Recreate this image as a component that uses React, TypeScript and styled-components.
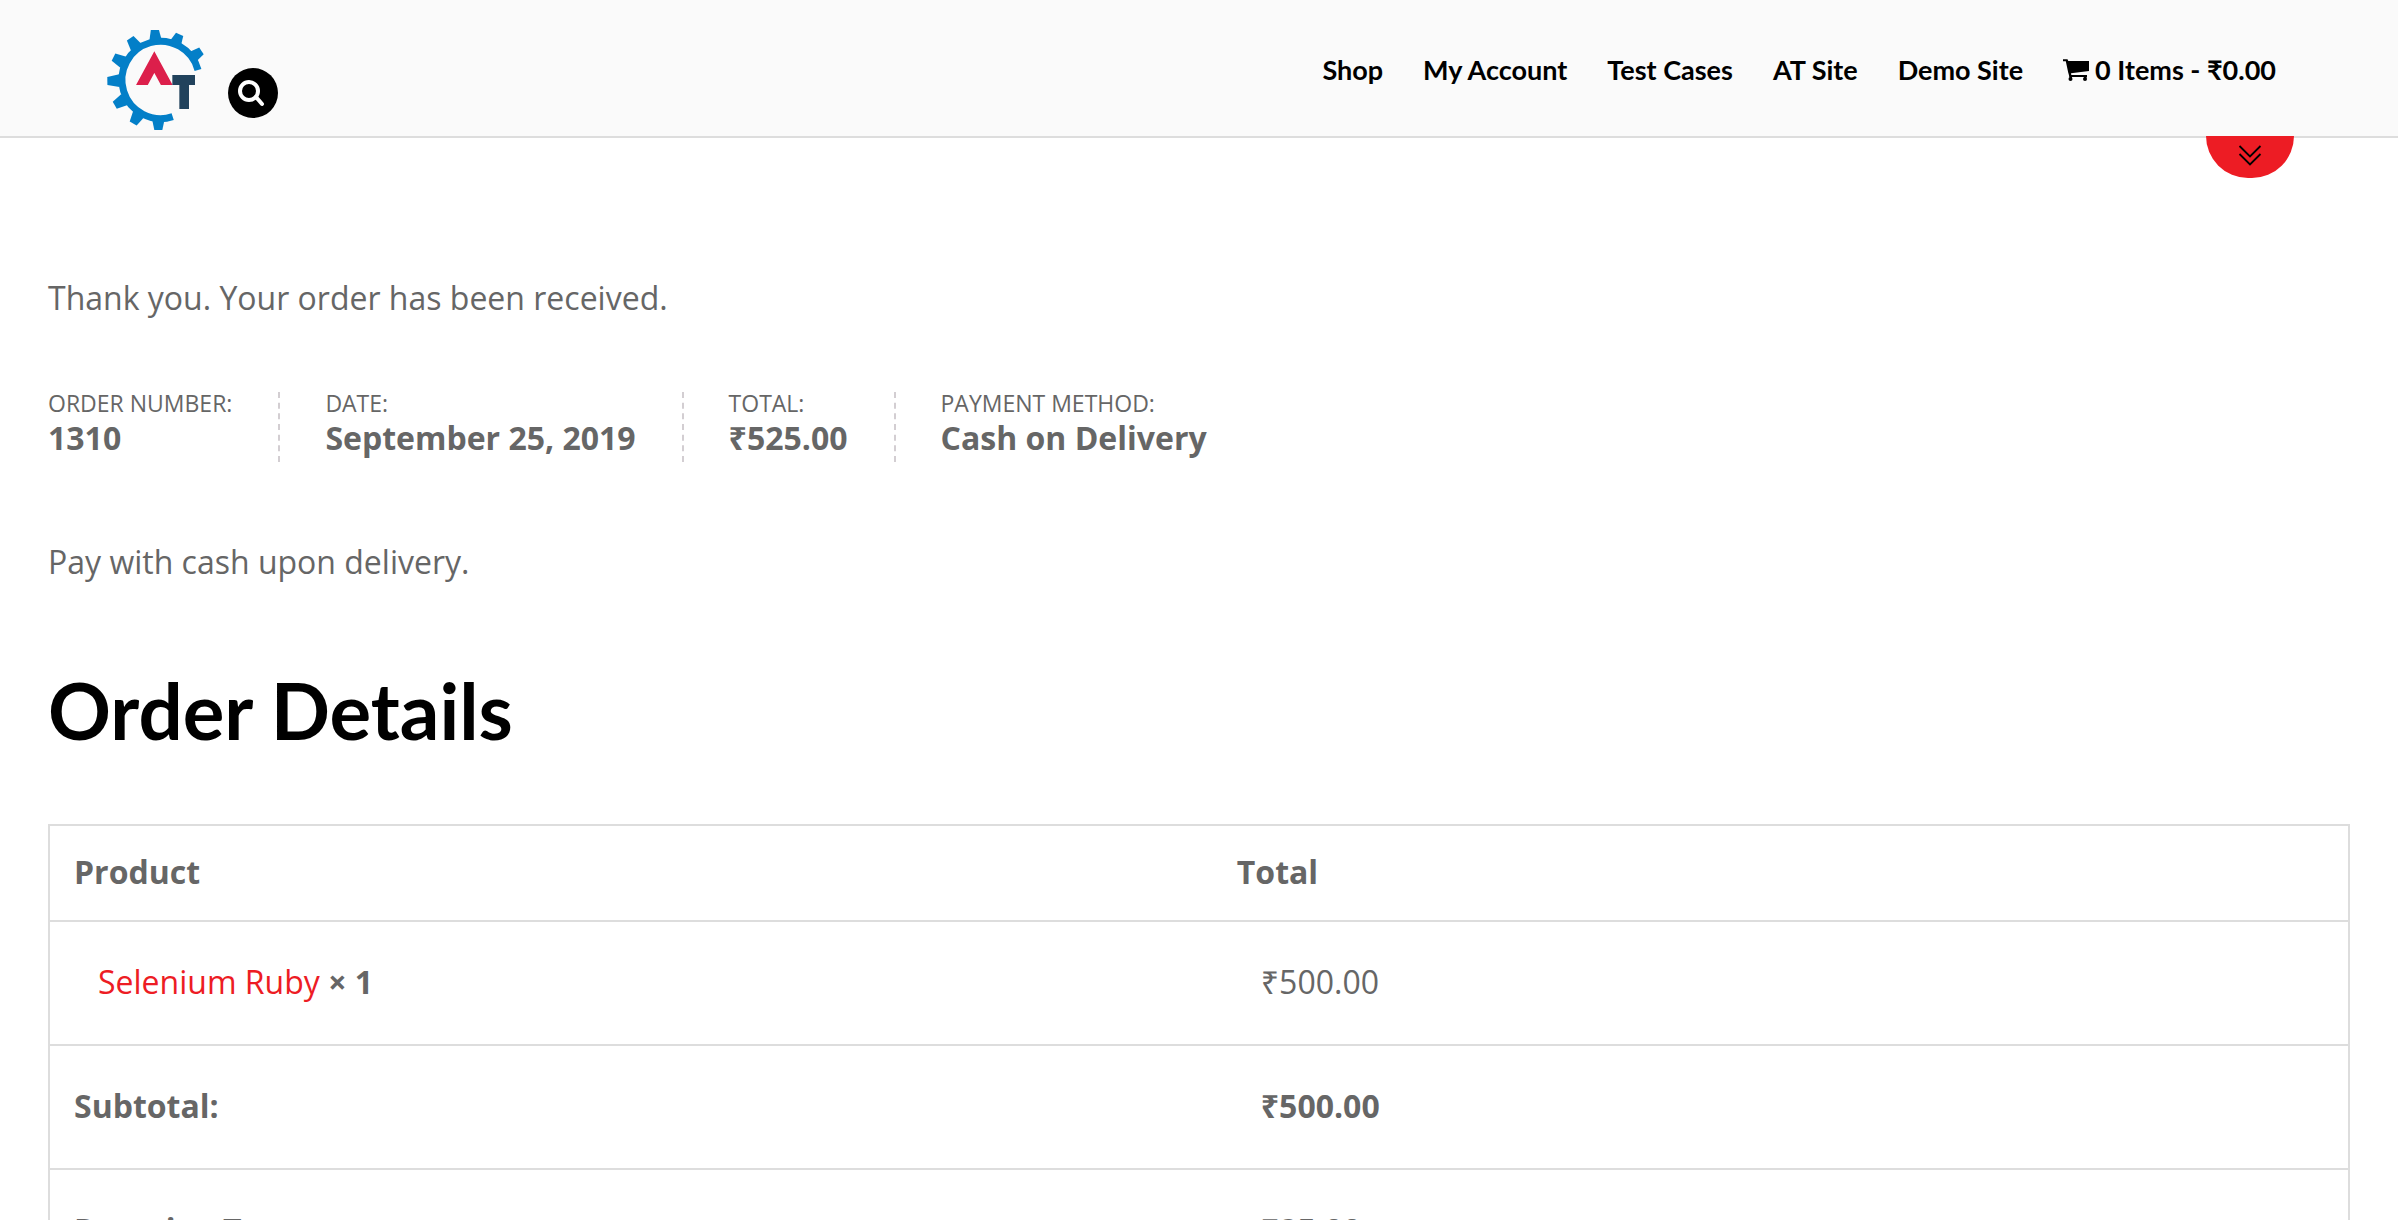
import React from "react";
import styled, { createGlobalStyle } from "styled-components";

const GlobalStyle = createGlobalStyle`
  *, *::before, *::after { box-sizing: border-box; }
  body {
    margin: 0;
    background: #fff;
    color: #666;
    font: 400 32px/48px "Open Sans", "Noto Sans", sans-serif;
  }
`;

const Header = styled.header`
  position: relative;
  display: flex;
  justify-content: space-between;
  align-items: flex-start;
  height: 138px;
  padding: 30px 122px 0 106px;
  background: #fafafa;
  border-bottom: 2px solid #ddd;
`;

const Brand = styled.div`
  display: flex;
  align-items: flex-end;
  gap: 24px;
`;

const HomeLink = styled.a`
  display: block;
  height: 100px;
`;

const SearchButton = styled.button`
  display: grid;
  place-items: center;
  width: 50px;
  height: 50px;
  margin-bottom: 12px;
  padding: 0;
  border: 0;
  border-radius: 50%;
  background: #000;
`;

const Nav = styled.nav`
  display: flex;
  gap: 40px;
  padding-top: 20px;
`;

const NavLink = styled.a`
  display: flex;
  align-items: center;
  gap: 6px;
  color: #000;
  font: 700 27px/40px Lato, "Open Sans", sans-serif;
  text-decoration: none;
  white-space: nowrap;
`;

const PanelToggle = styled.button`
  position: absolute;
  top: 136px;
  right: 104px;
  display: flex;
  justify-content: center;
  width: 88px;
  height: 42px;
  padding: 8px 0 0;
  border: 0;
  border-radius: 0 0 44px 44px;
  background: #ed1c24;
`;

const Main = styled.main`
  padding: 136px 48px 48px;
`;

const Message = styled.p`
  margin: 0;
`;

const Overview = styled.ul`
  display: flex;
  flex-wrap: wrap;
  gap: 45px;
  margin: 70px 0 76px;
  padding: 0;
  list-style: none;
`;

const OverviewItem = styled.li`
  padding-right: 46px;
  border-right: 2px dashed #d3ced2;
  font-size: 23px;
  line-height: 22px;
  text-transform: uppercase;

  &:last-child {
    padding-right: 0;
    border-right: 0;
  }
`;

const OverviewValue = styled.strong`
  display: block;
  font-size: 32px;
  line-height: 48px;
  text-transform: none;
`;

const Title = styled.h2`
  margin: 80px 0 70px;
  color: #000;
  font: 700 78px/88px Lato, "Open Sans", sans-serif;
`;

const OrderTable = styled.table`
  width: 100%;
  table-layout: fixed;
  border-collapse: collapse;
  border: 2px solid #ddd;
  text-align: left;
`;

const Row = styled.tr`
  border-top: 2px solid #ddd;
`;

const ColumnHead = styled.th<{ $width?: string }>`
  width: ${(p) => p.$width ?? "auto"};
  padding: 22px 24px 24px;
`;

const RowHead = styled.th`
  padding: 36px 24px 38px;
`;

const Cell = styled.td<{ $bold?: boolean }>`
  padding: 36px 48px 38px;
  font-weight: ${(p) => (p.$bold ? 700 : 400)};
`;

const ProductLink = styled.a`
  color: #ed1c24;
  text-decoration: none;
`;

const TEETH = [
  { angle: 34, reach: 356 + 5 },
  { angle: 65, reach: 356 },
  { angle: 94, reach: 356 },
  { angle: 124, reach: 356 },
  { angle: 153, reach: 356 },
  { angle: 181, reach: 358 },
  { angle: 210, reach: 356 },
  { angle: 240, reach: 356 },
  { angle: 270, reach: 355 },
];

const Logo = () => (
  <svg width="98" height="100" viewBox="48 60 294 300" role="img" aria-label="AT">
    <defs>
      <clipPath id="peak">
        <rect x="130" y="110" width="120" height="115" />
      </clipPath>
    </defs>
    <path d="M324 180 A116 116 0 1 0 248 320" fill="none" stroke="#037fc8" strokeWidth="21" />
    {TEETH.map(({ angle, reach }) => (
      <polygon
        key={angle}
        points={`322,-19 ${reach},-12 ${reach},12 322,19`}
        fill="#037fc8"
        transform={`translate(205 210) rotate(${-angle}) translate(-205 0)`}
      />
    ))}
    <polyline
      points="139,256 193,156 247,256"
      fill="none"
      stroke="#dc1f4b"
      strokeWidth="31"
      strokeMiterlimit="6"
      clipPath="url(#peak)"
    />
    <rect x="247" y="195" width="68" height="30" fill="#21425c" />
    <rect x="268" y="195" width="29" height="102" fill="#21425c" />
  </svg>
);

const SearchIcon = () => (
  <svg width="30" height="30" viewBox="0 0 30 30" fill="none" stroke="#fff" strokeWidth="4" aria-hidden="true">
    <circle cx="11" cy="13" r="9" />
    <path d="M18 19 L24 26" strokeLinecap="round" />
  </svg>
);

const CartIcon = () => (
  <svg width="26" height="24" viewBox="0 0 26 24" aria-hidden="true">
    <path d="M0 1.200 H4.500 L5.300 3 H26 V13 L8 15.200 L8.300 17 H24 V19 H6.500 L5.200 14.500 L2.800 3.200 H0 Z" />
    <circle cx="7.500" cy="21" r="2" />
    <circle cx="22" cy="21" r="2" />
    <path d="M6.500 17 h2.500 v3 h-2.500 z M21 17 h2.500 v3 h-2.500 z" />
  </svg>
);

const ChevronsIcon = () => (
  <svg width="24" height="24" viewBox="0 0 24 24" fill="none" stroke="#000" strokeWidth="1.800" aria-hidden="true">
    <path d="M1.500 2 L12 12.500 L22.500 2" />
    <path d="M1.500 10 L12 20.500 L22.500 10" />
  </svg>
);

const links = ["Shop", "My Account", "Test Cases", "AT Site", "Demo Site"];

const overview = [
  ["Order number:", "1310"],
  ["Date:", "September 25, 2019"],
  ["Total:", "₹525.00"],
  ["Payment method:", "Cash on Delivery"],
];

const totals = [
  ["Subtotal:", "₹500.00"],
  ["Roaming Tax:", "₹25.00"],
];

export default function App() {
  return (
    <>
      <GlobalStyle />
      <Header>
        <Brand>
          <HomeLink href="#">
            <Logo />
          </HomeLink>
          <SearchButton type="button" aria-label="Search">
            <SearchIcon />
          </SearchButton>
        </Brand>
        <Nav>
          {links.map((label) => (
            <NavLink key={label} href="#">
              {label}
            </NavLink>
          ))}
          <NavLink href="#">
            <CartIcon />
            0 Items - ₹0.00
          </NavLink>
        </Nav>
        <PanelToggle type="button" aria-label="Open panel">
          <ChevronsIcon />
        </PanelToggle>
      </Header>
      <Main>
        <Message>Thank you. Your order has been received.</Message>
        <Overview>
          {overview.map(([label, value]) => (
            <OverviewItem key={label}>
              {label}
              <OverviewValue>{value}</OverviewValue>
            </OverviewItem>
          ))}
        </Overview>
        <Message>Pay with cash upon delivery.</Message>
        <Title>Order Details</Title>
        <OrderTable>
          <thead>
            <tr>
              <ColumnHead scope="col" $width="50.6%">
                Product
              </ColumnHead>
              <ColumnHead scope="col">Total</ColumnHead>
            </tr>
          </thead>
          <tbody>
            <Row>
              <Cell>
                <ProductLink href="#">Selenium Ruby</ProductLink> <strong>× 1</strong>
              </Cell>
              <Cell>₹500.00</Cell>
            </Row>
          </tbody>
          <tfoot>
            {totals.map(([label, value]) => (
              <Row key={label}>
                <RowHead scope="row">{label}</RowHead>
                <Cell $bold>{value}</Cell>
              </Row>
            ))}
          </tfoot>
        </OrderTable>
      </Main>
    </>
  );
}
